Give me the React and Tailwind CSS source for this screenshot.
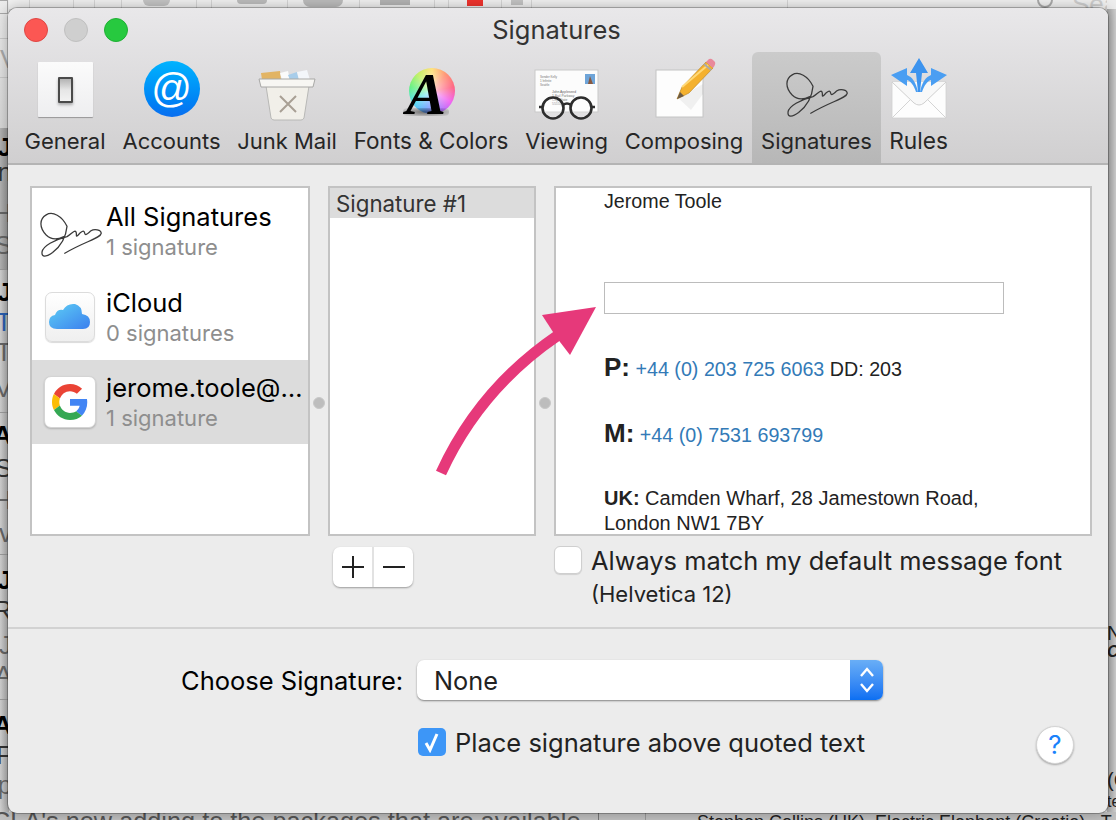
const SIG = "M215 258C200 225 170 210 150 222C128 235 128 262 150 285C165 300 185 300 205 290M215 258C212 290 195 320 170 340C150 355 135 355 137 338C140 320 175 300 215 290C228 283 238 268 243 275C247 283 240 295 250 285C258 275 268 268 270 278C272 290 280 280 290 272C300 265 322 268 322 280C320 295 270 305 208 342";

function Signature({ className }) {
  return (
    <svg viewBox="125 210 205 150" className={className} fill="none">
      <path d={SIG} stroke="#3a3a3a" strokeWidth="4" strokeLinecap="round" strokeLinejoin="round" />
    </svg>
  );
}

function Icon({ children }) {
  return (
    <svg width="62" height="62" viewBox="0 0 62 62" className="overflow-visible">
      {children}
    </svg>
  );
}

const GeneralIcon = () => (
  <div className="w-[62px] h-[62px] pt-[2px] pl-[4px]">
    <div className="w-[55px] h-[55px] bg-gradient-to-b from-[#fbfbfb] to-[#eeeef0] rounded-[1px] shadow-[0_1px_1px_rgba(0,0,0,0.3)] flex items-center justify-center">
      <div className="w-[15px] h-[26px] border-2 border-[#4a4a4a] rounded-[1px] bg-gradient-to-b from-[#b4b4b4] via-[#e6e6e6] to-[#f2f2f2] shadow-[0_2px_3px_rgba(0,0,0,0.3)]" />
    </div>
  </div>
);

const AccountsIcon = () => (
  <div className="w-[62px] h-[62px] pt-[1px] pl-[3px]">
    <div className="w-[56px] h-[56px] rounded-full bg-gradient-to-b from-[#03b3fe] to-[#0a6ef0] flex items-center justify-center text-white text-[40px] leading-none font-['Liberation_Sans',sans-serif] pb-[3px]">
      @
    </div>
  </div>
);

const JunkIcon = () => (
  <Icon>
    <path d="M5 13L24 11L25 20H6Z" fill="#e2b464" />
    <path d="M24 13L32 11L34 20H26Z" fill="#fbfbfb" />
    <path d="M32 15L41 12L43 20H34Z" fill="#a8cdea" />
    <path d="M41 12L51 10L54 20H43Z" fill="#f3f6fa" />
    <path d="M10 26H53L48 58Q47 60 45 60H18Q16 60 15 58Z" fill="#f1efe9" stroke="#b8b8b6" strokeWidth="1" />
    <path d="M3 19H59L57 27H5Z" fill="#f7f6f3" stroke="#a8a8a6" strokeWidth="1" />
    <path d="M24 36L40 52M40 36L24 52" stroke="#a89f94" strokeWidth="2" />
  </Icon>
);

const FontsIcon = () => (
  <div className="relative w-[62px] h-[62px]">
    <div className="absolute left-[9px] top-[8px] w-[46px] h-[46px] rounded-full bg-[conic-gradient(from_0deg,#ffe079,#ff8f70,#ff6080,#f060f0,#a070ff,#60a0ff,#50e0f0,#60f080,#c0f060,#ffe079)]" />
    <div className="absolute left-[9px] top-[8px] w-[46px] h-[46px] rounded-full bg-[radial-gradient(circle,rgba(255,255,255,0.7),rgba(255,255,255,0)_72%)]" />
    <div className="absolute left-[3px] top-[48px] w-[46px] h-[8px] rounded-full bg-[radial-gradient(ellipse,rgba(0,0,0,0.5),rgba(0,0,0,0))]" />
    <div className="absolute left-[1px] top-[4px] w-[50px] text-center text-black text-[60px] leading-[60px] italic font-bold font-['Liberation_Serif',serif]">A</div>
  </div>
);

const ViewingIcon = () => (
  <Icon>
    <rect x="-1" y="10" width="63" height="42" fill="#fcfcfc" stroke="#c9c9c9" strokeWidth="1" />
    <text x="4" y="18" fontSize="3" fill="#777" fontFamily="Liberation Sans">Sender Kelly</text>
    <text x="4" y="22" fontSize="3" fill="#777" fontFamily="Liberation Sans">1 Infinite</text>
    <text x="4" y="26" fontSize="3" fill="#777" fontFamily="Liberation Sans">Seattle</text>
    <rect x="49" y="14" width="10" height="10" fill="#6ea4d8" />
    <path d="M52 24L54 16L57 24Z" fill="#8a5a40" />
    <text x="16" y="33" fontSize="3.4" fill="#666" fontFamily="Liberation Sans">John Appleseed</text>
    <text x="16" y="37" fontSize="3.4" fill="#777" fontFamily="Liberation Sans">1 Sail Parkway</text>
    <text x="16" y="41" fontSize="3.4" fill="#777" fontFamily="Liberation Sans">City, State</text>
    <text x="16" y="45" fontSize="3.4" fill="#777" fontFamily="Liberation Sans">55555</text>
    <circle cx="17" cy="48" r="10.5" fill="rgba(255,255,255,0.25)" stroke="#2d2d2d" strokeWidth="2.6" />
    <circle cx="45" cy="48" r="10.5" fill="rgba(255,255,255,0.25)" stroke="#2d2d2d" strokeWidth="2.6" />
    <path d="M27 45Q31 42 35 45M6 47L3 47M56 47L59 47" stroke="#2d2d2d" strokeWidth="2.4" fill="none" />
  </Icon>
);

const ComposingIcon = () => (
  <Icon>
    <rect x="3" y="10" width="47" height="47" fill="#fdfdfd" stroke="#c4c4c4" strokeWidth="1" />
    <path d="M25 38L50 24V34L38 50Z" fill="rgba(0,0,0,0.05)" />
    <path d="M24 39L29 27L53 2L60 8L36 33Z" fill="#f4b12e" stroke="#b47f1e" strokeWidth="0.6" />
    <path d="M29 27L55 5" stroke="#ffd978" strokeWidth="2" />
    <path d="M24 39L27 32L31 36Z" fill="#6b5a45" />
    <path d="M53 2L56 -1Q58 -2 60 0L62 2Q63 4 60 8Z" fill="#e9899b" />
    <path d="M51 4L58 10" stroke="#aaa" strokeWidth="2" />
  </Icon>
);

const SignatureIcon = () => (
  <div className="w-[66px] h-[62px] flex items-start">
    <Signature className="w-[66px] h-[48px] mt-[11px]" />
  </div>
);

const RulesIcon = () => (
  <Icon>
    <path d="M4 22H58V58H4Z" fill="#fdfdfd" stroke="#d0d0d0" strokeWidth="0.8" />
    <path d="M4 22L26 43Q31 47 36 43L58 22" fill="#f8f8f8" stroke="#d0d0d0" strokeWidth="1" />
    <path d="M4 58L22 40M58 58L40 40" stroke="#d4d4d4" strokeWidth="1" />
    <path d="M30 32H32L34 13H40L31 -2L22 13H28Z" fill="#3c93ee" />
    <path d="M28 32H30C28 22 24 17 19 15V8L3 15L19 26V20C23 21 26 26 28 32Z" fill="#4a9ef2" />
    <path d="M34 32H32C34 22 38 17 43 15V8L59 15L43 26V20C39 21 36 26 34 32Z" fill="#4a9ef2" />
  </Icon>
);

const tabs = [
  ["General", <GeneralIcon />, "w-[80px] text-[22px]"],
  ["Accounts", <AccountsIcon />, "w-[97px] text-[22px]"],
  ["Junk Mail", <JunkIcon />, "w-[98px] text-[22px]"],
  ["Fonts & Colors", <FontsIcon />, "w-[154px] text-[22.5px]"],
  ["Viewing", <ViewingIcon />, "w-[81px] text-[22px]"],
  ["Composing", <ComposingIcon />, "w-[118px] text-[22px]"],
  ["Signatures", <SignatureIcon />, "w-[111px] text-[22px]", true],
  ["Rules", <RulesIcon />, "w-[57px] text-[22.7px]"],
];

function Tab({ label, icon, width, active }) {
  return (
    <div className={`flex flex-col items-center px-[9px] pt-[8px] pb-[9px] h-[111px] rounded-t-[6px] ${active ? "bg-gradient-to-b from-[#cbcbcb] to-[#b7b7b7]" : ""}`}>
      <div className="h-[62px] w-[40px] flex justify-center">
        <div className="shrink-0">{icon}</div>
      </div>
      <div className={`mt-[6px] h-[26px] leading-[26px] text-center text-[#262626] whitespace-nowrap flex justify-center ${width}`}>{label}</div>
    </div>
  );
}

const ICloudTile = () => (
  <div className="w-[50px] h-[50px] rounded-[7px] border border-[#dcdcdc] bg-gradient-to-b from-white to-[#efefef] shadow-[0_1px_1px_rgba(0,0,0,0.15)] flex items-center justify-center">
    <svg width="42" height="28" viewBox="0 0 42 28">
      <defs>
        <linearGradient id="cloud" x1="0" x2="1" y1="0" y2="1">
          <stop offset="0" stopColor="#5ed0f5" />
          <stop offset="1" stopColor="#3b7fee" />
        </linearGradient>
      </defs>
      <path d="M8 26Q0 26 0 19Q0 13 6 12Q8 6 14 7Q18 0 26 1Q33 3 33 11Q41 12 41 19Q41 26 34 26Z" fill="url(#cloud)" />
    </svg>
  </div>
);

const GoogleTile = () => (
  <div className="w-[52px] h-[52px] rounded-[7px] border border-[#d4d4d4] bg-white shadow-[0_1px_2px_rgba(0,0,0,0.2)] flex items-center justify-center">
    <svg width="36" height="36" viewBox="0 0 48 48">
      <path fill="#EA4335" d="M24 9.5c3.5 0 6.7 1.2 9.2 3.6l6.9-6.9C35.9 2.4 30.5 0 24 0 14.6 0 6.5 5.4 2.6 13.2l8 6.2C12.5 13.7 17.8 9.5 24 9.5z" />
      <path fill="#4285F4" d="M47 24.5c0-1.6-.1-3.1-.4-4.5H24v9h12.9c-.6 3-2.2 5.5-4.8 7.2l7.7 6C44.3 37.6 47 31.6 47 24.5z" />
      <path fill="#FBBC05" d="M10.5 28.6C10 27.1 9.7 25.6 9.7 24s.3-3.1.8-4.6l-8-6.2C.9 16.4 0 20.1 0 24s.9 7.6 2.6 10.8l7.9-6.2z" />
      <path fill="#34A853" d="M24 48c6.5 0 11.9-2.1 15.900-5.800l-7.700-6c-2.200 1.500-5 2.300-8.200 2.300-6.200 0-11.500-4.200-13.500-9.900l-7.900 6.200C6.500 42.600 14.600 48 24 48z" />
    </svg>
  </div>
);

function Account({ icon, name, sub, rowClass }) {
  return (
    <div className={`flex items-center ${rowClass}`}>
      <div className="w-[75px] flex justify-center shrink-0">{icon}</div>
      <div className="min-w-0 flex-1 -ml-[1px]">
        <div className="text-[25.5px] leading-[30px] text-black truncate pr-[2px]">{name}</div>
        <div className="text-[22px] leading-[26px] mt-[2px] text-[#8e8e8e]">{sub}</div>
      </div>
    </div>
  );
}

const Dot = () => (
  <div className="flex justify-center">
    <div className="w-[12px] h-[12px] rounded-full bg-[#bdbdbd] border border-[#c8c8c8] mt-[211px]" />
  </div>
);

const mailRows = [
  { h: "h-[142px]", bg: "bg-gradient-to-r from-[#b4b4b4] to-[#949494]", lines: [["J", "font-bold text-black", "mt-[7px]"], ["n", "text-[#333]", "mt-[1px]"], ["H", "text-[#666]", "mt-[17px]"], ["S", "text-[#666]", "mt-[8px]"]] },
  { h: "h-[143px]", lines: [["J", "font-bold text-black", "mt-[10px]"], ["T", "text-[#2a5fb0]", "mt-[6px]"], ["T", "text-[#666]", "mt-[6px]"], ["V", "text-[#666]", "mt-[12px]"]] },
  { h: "h-[142px]", lines: [["A", "font-bold text-black", "mt-[10px]"], ["S", "text-[#333]", "mt-[9px]"], ["H", "text-[#666]", "mt-[8px]"], ["v", "text-[#666]", "mt-[9px]"]] },
  { h: "h-[145px]", lines: [["J", "font-bold text-black", "mt-[13px]"], ["R", "text-[#333]", "mt-[6px]"], ["J", "text-[#666]", "mt-[11px]"], ["A", "text-[#666]", "mt-[6px]"]] },
  { h: "h-[120px]", lines: [["A", "font-bold text-black", "mt-[13px]"], ["F", "text-[#333]", "mt-[6px]"], ["p", "text-[#666]", "mt-[6px]"]] },
];

function LeftStrip() {
  return (
    <div className="absolute left-0 top-0 w-[9px] h-full overflow-hidden flex flex-col font-['Liberation_Sans',sans-serif] text-[26px] leading-[24px] bg-gradient-to-r from-[#d2d2d2] to-[#aaaaaa]">
      <div className="h-[128px] shrink-0 bg-gradient-to-b from-[#ececec] to-[#d8d8d8]">
        <div className="w-[8px] h-[14px] border border-[#a8a8a8] border-l-0" />
        <div className="h-[40px] mt-[24px] border-y border-[#c8c8c8] text-[#aaa] leading-[40px]">V</div>
      </div>
      {mailRows.map((row, i) => (
        <div key={i} className={`shrink-0 border-b border-[#9c9c9c] ${row.h} ${row.bg || ""}`}>
          {row.lines.map(([c, cls, mt], j) => (
            <div key={j} className={`h-[24px] -ml-[8px] w-[20px] text-right ${cls} ${mt}`}>
              {c}
            </div>
          ))}
        </div>
      ))}
    </div>
  );
}

const topLines = ["w-[30px]", "w-[44px]", "w-[21px]", "w-[27px]", "w-[75px]", "w-[15px]", "w-[76px]", "w-[72px]", "w-[75px]", "w-[14px]", "w-[53px]", "w-[30px]", "w-[256px]"];

function Backdrop() {
  return (
    <div className="absolute inset-0 overflow-hidden bg-[#dadada]">
      <div className="absolute left-0 top-0 w-full h-[9px] bg-[#f1f1f1] flex">
        {topLines.map((w, i) => (
          <div key={i} className={`h-full border-r border-[#d6d6d6] shrink-0 ${w}`} />
        ))}
        <div className="absolute left-[143px] top-0 w-[27px] h-[6px] bg-[#c4c4c4] rounded-b-[6px]" />
        <div className="absolute left-[237px] top-0 w-[30px] h-[4px] bg-[#bcbcbc] rounded-b-[6px]" />
        <div className="absolute left-[303px] top-0 w-[40px] h-[7px] bg-[#bcbcbc] rounded-b-[8px]" />
        <div className="absolute left-[380px] top-0 w-[30px] h-[5px] bg-[#b4b4b4]" />
        <div className="absolute left-[467px] top-0 w-[16px] h-[6px] bg-[#f0342e]" />
        <div className="absolute left-[511px] top-0 w-[12px] h-[5px] bg-[#c4c4c4]" />
        <div className="absolute left-[1037px] top-[-8px] w-[16px] h-[16px] rounded-full border-2 border-[#aaa]" />
        <div className="absolute left-[1072px] -top-[15px] text-[26px] text-[#cfcfcf] font-['Liberation_Sans',sans-serif]">Sea</div>
      </div>
      <LeftStrip />
      <div className="absolute right-0 top-0 w-[9px] h-full bg-gradient-to-l from-[#d0d0d0] to-[#a8a8a8] font-['Liberation_Sans',sans-serif] text-[20px] text-[#222] overflow-hidden">
        <div className="h-[9px] bg-[#eeeeee]" />
        <div className="absolute left-0 top-[618px]">N</div>
        <div className="absolute left-0 top-[640px] text-[16px] font-bold italic">CA</div>
        <div className="absolute left-0 top-[765px]">(C</div>
        <div className="absolute left-0 top-[790px] text-[16px]">te</div>
      </div>
      <div className="absolute left-0 bottom-0 w-full h-[8px] bg-[#c0c0c0] overflow-hidden font-['Liberation_Sans',sans-serif] whitespace-nowrap">
        <div className="absolute left-[-8px] top-[-5px] text-[25.3px] leading-[28px] text-[#555]">CLA's now adding to the packages that are available</div>
        <div className="absolute left-[598px] top-0 w-px h-full bg-[#777]" />
        <div className="absolute left-[645px] top-0 w-px h-full bg-[#999]" />
        <div className="absolute left-[697px] top-[-1px] text-[18px] leading-[22px] text-[#222]">Stephen Collins (UK), Electric Elephant (Croatia) - T</div>
      </div>
    </div>
  );
}

function Arrow() {
  return (
    <svg className="absolute left-[420px] top-[290px] pointer-events-none" width="190" height="195" viewBox="420 290 190 195">
      <path d="M441 473C463 425 500 375 557 336" fill="none" stroke="#e6397a" strokeWidth="11" />
      <path d="M596 307L542 315L553 332L560 342L570 355Z" fill="#e6397a" />
    </svg>
  );
}

export default function App() {
  return (
    <div className="relative w-[1116px] h-[820px] overflow-hidden font-['Inter',sans-serif]">
      <Backdrop />
      <div className="absolute left-[8px] top-[8px] w-[1100px] h-[805px] rounded-[9px] overflow-hidden bg-[#ececec] shadow-[0_0_0_1px_rgba(0,0,0,0.25),0_0_14px_rgba(0,0,0,0.3)] flex flex-col">
        <div className="h-[157px] shrink-0 bg-gradient-to-b from-[#e9e8ea] to-[#d0cfd0] border-b-2 border-[#b4b4b4]">
          <div className="relative h-[44px] flex items-center justify-center text-[25.5px] text-[#333]">
            <div className="absolute left-[16px] top-[10px] flex gap-[16px]">
              <div className="w-[24px] h-[24px] rounded-full bg-[#fc5753] border border-[#df4744]" />
              <div className="w-[24px] h-[24px] rounded-full bg-[#cfcfcf] border border-[#c0c0c0]" />
              <div className="w-[24px] h-[24px] rounded-full bg-[#27c93f] border border-[#1fb034]" />
            </div>
            <span className="-ml-[3px]">Signatures</span>
          </div>
          <div className="flex pl-[8px]">
            {tabs.map(([label, icon, width, active]) => (
              <Tab key={label} label={label} icon={icon} width={width} active={active} />
            ))}
          </div>
        </div>

        <div className="pl-[22px] pr-[16px] pt-[21px]">
          <div className="grid grid-cols-[280px_18px_208px_18px_538px] h-[350px]">
            <div className="border-2 border-[#c3c3c3] bg-white overflow-hidden">
              <Account rowClass="h-[86px]" icon={<Signature className="w-[66px] h-[48px] mt-[8px] ml-[2px]" />} name="All Signatures" sub="1 signature" />
              <Account rowClass="h-[86px]" icon={<ICloudTile />} name="iCloud" sub="0 signatures" />
              <Account rowClass="h-[84px] bg-[#dcdcdc]" icon={<GoogleTile />} name="jerome.toole@gmail.com" sub="1 signature" />
            </div>
            <Dot />
            <div className="border-2 border-[#c3c3c3] bg-white">
              <div className="h-[30px] leading-[32px] bg-[#dcdcdc] pl-[6px] text-[22.3px] text-[#333]">Signature #1</div>
            </div>
            <Dot />
            <div className="border-2 border-[#c3c3c3] bg-white overflow-hidden pl-[48px] font-['Liberation_Sans',sans-serif] text-[#222] text-[19.7px]">
              <div className="h-[26px] leading-[26px]">Jerome Toole</div>
              <div className="w-[400px] h-[32px] mt-[68px] border border-[#bcbcbc]" />
              <div className="mt-[35px] h-[36px] leading-[36px] whitespace-nowrap">
                <b className="text-[26px]">P:</b> <span className="text-[#337ab7]">+44 (0) 203 725 6063</span> DD: 203
              </div>
              <div className="mt-[30px] h-[36px] leading-[36px] whitespace-nowrap">
                <b className="text-[26px]">M:</b> <span className="text-[#337ab7]">+44 (0) 7531 693799</span>
              </div>
              <div className="mt-[35px] leading-[25px] text-[20px]">
                <b>UK:</b> Camden Wharf, 28 Jamestown Road,<br />London NW1 7BY
              </div>
            </div>
          </div>

          <div className="grid grid-cols-[280px_18px_208px_18px_538px]">
            <div className="col-start-3 pt-[11px] pl-[5px]">
              <div className="w-[80px] h-[40px] rounded-[7px] bg-white shadow-[0_1px_2px_rgba(0,0,0,0.35)] flex">
                <div className="w-[41px] flex items-center justify-center border-r-2 border-[#e2e2e2]">
                  <svg width="24" height="24" viewBox="0 0 24 24"><path d="M12 1V23M1 12H23" stroke="#222" strokeWidth="2" /></svg>
                </div>
                <div className="flex-1 flex items-center justify-center">
                  <svg width="24" height="24" viewBox="0 0 24 24"><path d="M1 12H23" stroke="#222" strokeWidth="2" /></svg>
                </div>
              </div>
            </div>
            <div className="col-start-5 pt-[10px] flex">
              <div className="w-[28px] h-[28px] rounded-[6px] bg-white border border-[#cfcfcf] shadow-[0_1px_1px_rgba(0,0,0,0.12)] shrink-0" />
              <div className="ml-[9px]">
                <div className="text-[25.4px] leading-[30px] text-[#222] whitespace-nowrap">Always match my default message font</div>
                <div className="text-[22px] leading-[26px] mt-[5px] text-[#222]">(Helvetica 12)</div>
              </div>
            </div>
          </div>
        </div>

        <div className="h-[2px] mt-[20px] bg-[#d2d2d2] shrink-0" />

        <div className="pt-[31px] flex-1 flex flex-col">
          <div className="flex items-center h-[40px] pl-[173px]">
            <div className="text-[25.5px] text-black w-[222px] whitespace-nowrap pt-[2px]">Choose Signature:</div>
            <div className="ml-[14px] w-[466px] h-[40px] rounded-[7px] bg-white shadow-[0_1px_2px_rgba(0,0,0,0.45)] flex overflow-hidden">
              <div className="flex-1 pl-[17px] text-[25.3px] leading-[42px] text-[#222]">None</div>
              <div className="w-[33px] bg-gradient-to-b from-[#69aef6] to-[#0a6ff2] flex items-center justify-center">
                <svg width="18" height="30" viewBox="0 0 18 30" fill="none"><path d="M3 11L9 4L15 11M3 19L9 26L15 19" stroke="white" strokeWidth="2.4" /></svg>
              </div>
            </div>
          </div>
          <div className="flex items-start pl-[410px] pr-[34px] mt-[28px]">
            <div className="w-[28px] h-[28px] rounded-[5px] bg-[#3d96f7] flex items-center justify-center shrink-0">
              <svg width="20" height="22" viewBox="0 0 20 22" fill="none"><path d="M4 12L8 19L15 3" stroke="white" strokeWidth="3" /></svg>
            </div>
            <div className="ml-[9px] text-[25.5px] leading-[30px] text-[#222] whitespace-nowrap">Place signature above quoted text</div>
            <div className="ml-auto -mt-[2px] w-[38px] h-[38px] rounded-full bg-white border border-[#d4d4d4] shadow-[0_1px_2px_rgba(0,0,0,0.3)] flex items-center justify-center text-[#1a82fb] text-[26px] leading-none">?</div>
          </div>
        </div>
      </div>
      <Arrow />
    </div>
  );
}
